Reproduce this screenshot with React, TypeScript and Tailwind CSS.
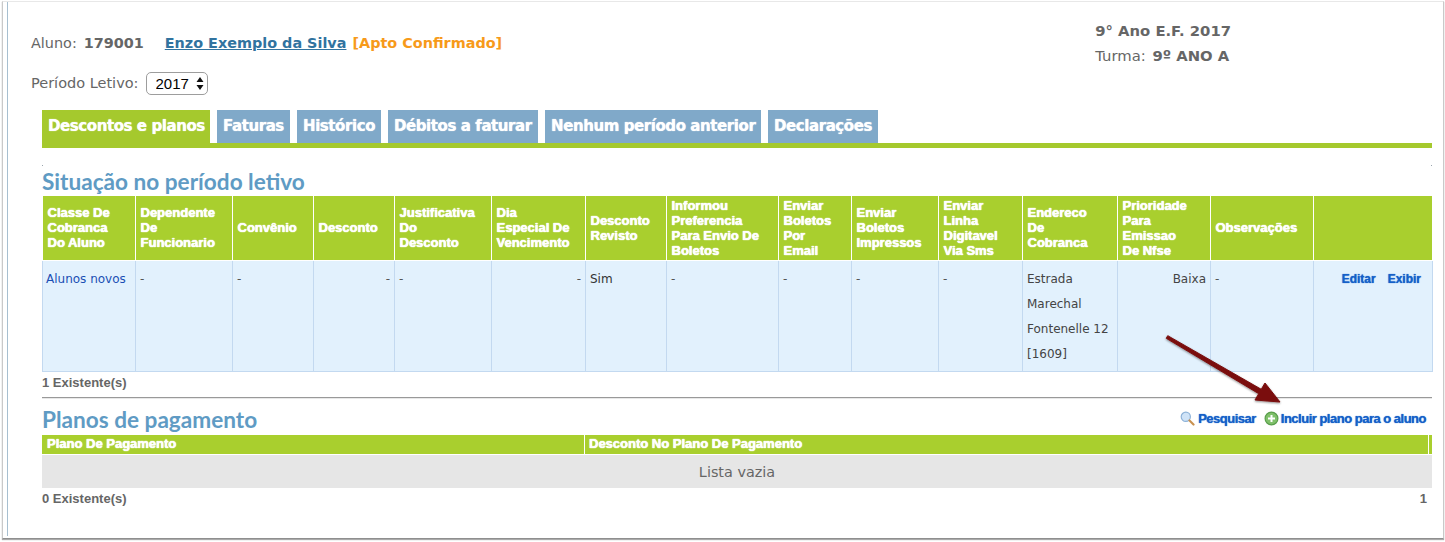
const headers: { label: string[]; w: number }[] = [
  { label: ["Classe De", "Cobranca", "Do Aluno"], w: 93 },
  { label: ["Dependente", "De", "Funcionario"], w: 97 },
  { label: ["Convênio"], w: 81 },
  { label: ["Desconto"], w: 81 },
  { label: ["Justificativa", "Do", "Desconto"], w: 97 },
  { label: ["Dia", "Especial De", "Vencimento"], w: 94 },
  { label: ["Desconto", "Revisto"], w: 81 },
  { label: ["Informou", "Preferencia", "Para Envio De", "Boletos"], w: 112 },
  { label: ["Enviar", "Boletos", "Por", "Email"], w: 73 },
  { label: ["Enviar", "Boletos", "Impressos"], w: 87 },
  { label: ["Enviar", "Linha", "Digitavel", "Via Sms"], w: 84 },
  { label: ["Endereco", "De", "Cobranca"], w: 95 },
  { label: ["Prioridade", "Para", "Emissao", "De Nfse"], w: 93 },
  { label: ["Observações"], w: 103 },
  { label: [""], w: 119 },
];

function Tab({ label, active }: { label: string; active?: boolean }) {
  return (
    <div
      className={
        active
          ? "flex h-[33px] items-start whitespace-nowrap bg-[#a5c92d] px-[6px] pt-[5px] text-[15px] font-bold text-white [font-family:'DejaVu_Sans',sans-serif] tracking-[-0.42px] [text-shadow:0_0_1px_#fff]"
          : "flex h-[33px] items-start whitespace-nowrap bg-[#80a9c9] px-[6px] pt-[5px] text-[15px] font-bold text-white [font-family:'DejaVu_Sans',sans-serif] tracking-[-0.42px] [text-shadow:0_0_1px_#fff]"
      }
    >
      {label}
    </div>
  );
}

function Dot() {
  return <div className="h-px w-px bg-[#9aa5ad]" />;
}

export default function App() {
  return (
    <div className="relative h-[542px] w-[1445px] overflow-hidden bg-white pt-px text-[#666] [font-family:'DejaVu_Sans',sans-serif]">
      <div className="ml-[2px] h-[538px] w-[1442px] border-x border-b border-x-[#c9c9c9] border-b-[#8f8f8f] border-t border-t-[#e8e8e8] pl-[4px] shadow-[0_1px_1px_#aaa]">
        <div className="h-[534px] w-[1420px] border-l border-[#a7bfd0] pl-[23px]">
          <div className="flex justify-between">
            <div className="pt-[32px]">
              <div className="flex h-[18px] items-center text-[14.4px] leading-[18px]">
                <span>Aluno:</span>
                <span className="ml-[7px] w-[81px] font-bold">179001</span>
                <a className="font-bold text-[#31739f] underline">Enzo Exemplo da Silva</a>
                <span className="ml-[6px] font-bold text-[#f79a1a]">[Apto Confirmado]</span>
              </div>
              <div className="mt-[20px] flex h-[23px] items-center text-[14.5px]">
                <span>Período Letivo:</span>
                <div className="relative ml-[7px] h-[23px] w-[62px]">
                  <select className="h-[23px] w-[62px] appearance-none rounded-[5px] border border-[#9d9d9d] bg-white pl-[9px] text-[15px] leading-[20px] text-black [font-family:'Liberation_Sans',sans-serif]">
                    <option>2017</option>
                  </select>
                  <svg className="absolute right-[4px] top-[5px] h-[13px] w-[8px]" viewBox="0 0 8 13">
                    <path d="M4 0 L7.5 5 L0.5 5 Z M4 13 L0.5 8 L7.5 8 Z" fill="#111" />
                  </svg>
                </div>
              </div>
            </div>
            <div className="mr-[196px] pt-[16px] text-[14.8px] leading-[25px]">
              <div className="font-bold">9° Ano E.F. 2017</div>
              <div>
                Turma: <span className="ml-[2px] font-bold">9º ANO A</span>
              </div>
            </div>
          </div>

          <div className="ml-[11px] mt-[15px] w-[1390px]">
            <div className="flex gap-[7px]">
              <div className="w-[168px]">
                <Tab label="Descontos e planos" active />
              </div>
              <div className="w-[73px]">
                <Tab label="Faturas" />
              </div>
              <div className="w-[84px]">
                <Tab label="Histórico" />
              </div>
              <div className="w-[150px]">
                <Tab label="Débitos a faturar" />
              </div>
              <div className="w-[216px]">
                <Tab label="Nenhum período anterior" />
              </div>
              <div className="w-[110px]">
                <Tab label="Declarações" />
              </div>
            </div>
            <div className="h-[5px] bg-[#a5c92d]" />

            <div className="mt-[17px] flex justify-between">
              <Dot />
              <Dot />
            </div>
            <h2 className="h-[30px] text-[22.6px] font-bold leading-[32px] text-[#5f9bc4] [font-family:'Lato',sans-serif]">
              Situação no período letivo
            </h2>

            <table className="w-[1390px] table-fixed border-collapse [font-family:'Liberation_Sans',sans-serif]">
              <colgroup>
                {headers.map((h, i) => (
                  <col key={i} style={{ width: h.w }} />
                ))}
              </colgroup>
              <thead>
                <tr className="h-[64px] bg-[#a9cf2e]">
                  {headers.map((h, i) => (
                    <th
                      key={i}
                      className="border-x border-b border-white pl-[4.5px] text-left align-middle text-[13px] font-bold leading-[15px] text-white [text-shadow:0_0_1px_#fff,0_0_1px_#fff]"
                    >
                      {h.label.map((l, j) => (
                        <div key={j}>{l}</div>
                      ))}
                    </th>
                  ))}
                </tr>
              </thead>
              <tbody>
                <tr className="h-[111px] bg-[#e2f1fd] text-[#555] [font-family:'DejaVu_Sans',sans-serif] text-[12px] leading-[25px]">
                  <td className="border border-[#c3d9f0] px-[3px] pt-[6px] align-top text-[#1a4fb4]">Alunos novos</td>
                  <td className="border border-[#c3d9f0] px-[4px] pt-[6px] align-top">-</td>
                  <td className="border border-[#c3d9f0] px-[4px] pt-[6px] align-top">-</td>
                  <td className="border border-[#c3d9f0] px-[4px] pt-[6px] text-right align-top">-</td>
                  <td className="border border-[#c3d9f0] px-[4px] pt-[6px] align-top">-</td>
                  <td className="border border-[#c3d9f0] px-[4px] pt-[6px] text-right align-top">-</td>
                  <td className="border border-[#c3d9f0] px-[4px] pt-[6px] align-top text-[#333]">Sim</td>
                  <td className="border border-[#c3d9f0] px-[4px] pt-[6px] align-top">-</td>
                  <td className="border border-[#c3d9f0] px-[4px] pt-[6px] align-top">-</td>
                  <td className="border border-[#c3d9f0] px-[4px] pt-[6px] align-top">-</td>
                  <td className="border border-[#c3d9f0] px-[4px] pt-[6px] align-top">-</td>
                  <td className="border border-[#c3d9f0] px-[4px] pt-[6px] align-top text-[#444]">
                    Estrada
                    <br />
                    Marechal
                    <br />
                    Fontenelle 12
                    <br />
                    [1609]
                  </td>
                  <td className="border border-[#c3d9f0] px-[4px] pt-[6px] text-right align-top text-[#444]">Baixa</td>
                  <td className="border border-[#c3d9f0] px-[4px] pt-[6px] align-top">-</td>
                  <td className="border border-[#c3d9f0] pr-[11px] pt-[6px] text-right align-top text-[12px] font-bold text-[#1560c8] [font-family:'Liberation_Sans',sans-serif] [text-shadow:0_0_1px_#1560c8]">
                    Editar<span className="ml-[12px]">Exibir</span>
                  </td>
                </tr>
              </tbody>
            </table>

            <div className="mt-[3px] h-[15px] text-[13px] font-bold leading-[15px] [font-family:'Liberation_Sans',sans-serif]">
              1 Existente(s)
            </div>
            <div className="mt-[7px] h-[2px] border-t border-[#999] bg-[#e8e8e8]" />

            <div className="flex h-[36px] items-end justify-between">
              <h2 className="mb-px h-[30px] text-[22.6px] font-bold leading-[32px] text-[#5f9bc4] [font-family:'Lato',sans-serif]">
                Planos de pagamento
              </h2>
              <div className="mb-[8px] mr-[6px] flex items-center text-[13px] font-bold leading-[16px] tracking-[-0.5px] text-[#1560c8] [font-family:'Liberation_Sans',sans-serif] [text-shadow:0_0_1px_#1560c8]">
                <svg className="mr-[3px] h-[15px] w-[15px]" viewBox="0 0 15 15">
                  <circle cx="5.8" cy="5.8" r="4.6" fill="#cfe3f7" stroke="#8db2d8" strokeWidth="1.2" />
                  <path d="M9.5 9.5 L13.5 13.5" stroke="#c8914f" strokeWidth="2.2" strokeLinecap="round" />
                </svg>
                <span>Pesquisar</span>
                <svg className="ml-[8px] mr-[2px] h-[15px] w-[15px]" viewBox="0 0 15 15">
                  <circle cx="7.5" cy="7.5" r="6.4" fill="#7fc06a" stroke="#5a9e4c" strokeWidth="1.2" />
                  <path d="M7.5 4 V11 M4 7.5 H11" stroke="#fff" strokeWidth="2" />
                </svg>
                <span>Incluir plano para o aluno</span>
              </div>
            </div>

            <div className="flex h-[19px] bg-[#a9cf2e] pl-px text-[13px] font-bold leading-[18px] text-white [font-family:'Liberation_Sans',sans-serif] [text-shadow:0_0_1px_#fff,0_0_1px_#fff]">
              <div className="w-[542px] border-r border-white pl-[4px]">Plano De Pagamento</div>
              <div className="w-[844px] border-r border-white pl-[4px]">Desconto No Plano De Pagamento</div>
            </div>
            <div className="mt-px flex h-[33px] items-center justify-center bg-[#e6e6e6] pt-[3px] text-[14.4px]">Lista vazia</div>

            <div className="mt-[3px] flex h-[15px] justify-between pr-[5px] text-[13px] font-bold leading-[15px] [font-family:'Liberation_Sans',sans-serif]">
              <span>0 Existente(s)</span>
              <span>1</span>
            </div>
          </div>
        </div>
      </div>

      <svg className="pointer-events-none absolute left-[1160px] top-[330px] h-[80px] w-[130px]" viewBox="0 0 130 80">
        <defs>
          <filter id="s" x="-20%" y="-20%" width="140%" height="140%">
            <feDropShadow dx="0" dy="1" stdDeviation="1" floodColor="#000" floodOpacity="0.45" />
          </filter>
        </defs>
        <path
          d="M7.75 5.7 L101.25 59.3 L105 53 L120 72 L95 70 L98.75 63.7 L6.25 8.3 Z"
          fill="#7a0f0f"
          stroke="#7a0f0f"
          strokeWidth="1"
          strokeLinejoin="round"
          filter="url(#s)"
        />
      </svg>
    </div>
  );
}
